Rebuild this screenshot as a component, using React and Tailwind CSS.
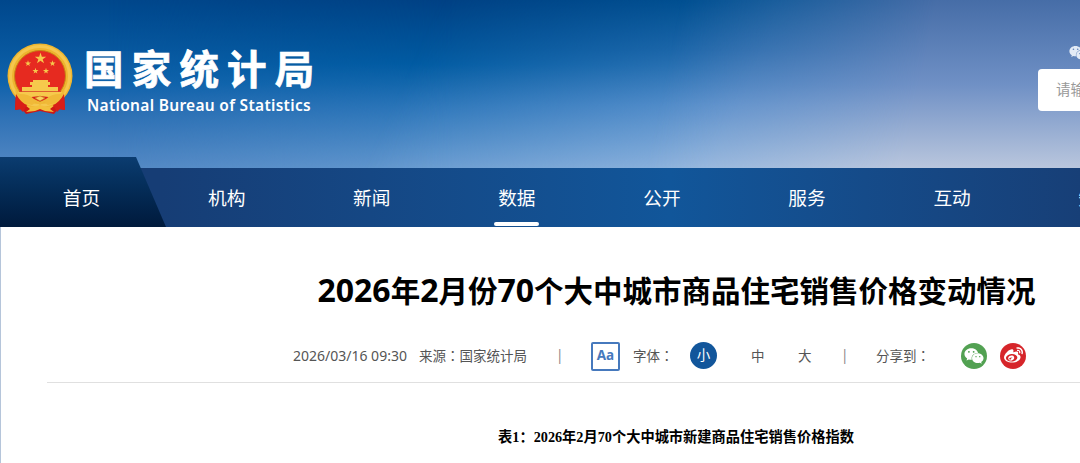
import { FaWeixin, FaWeibo } from 'react-icons/fa';

const navItems = ['首页', '机构', '新闻', '数据', '公开', '服务', '互动', '知识'];

function Emblem() {
  const star = 'M0-1 .225-.309 .951-.309 .363.118 .588.809 0 .382-.588.809-.363.118-.951-.309-.225-.309Z';
  return (
    <svg viewBox="0 0 68 72" className="h-[72px] w-[68px] shrink-0">
      <path d="M9 48 8 67l7-1 4 5 14-3 14 3 4-5 7 1-1-19Z" fill="#cf1714" />
      <circle cx="33" cy="33" r="32.5" fill="#eeb52f" />
      <circle cx="33" cy="33" r="29.5" fill="none" stroke="#f5c74e" strokeWidth="3" />
      <circle cx="33" cy="33" r="25.5" fill="#e62a20" stroke="#c98416" strokeWidth="1" />
      <g fill="#f6c94c">
        <path d={star} transform="translate(33.5 15.5) scale(6)" />
        <path d={star} transform="translate(21 20.5) scale(3.2)" />
        <path d={star} transform="translate(45.5 20.5) scale(3.2)" />
        <path d={star} transform="translate(28.5 28) scale(3.2)" />
        <path d={star} transform="translate(39 28) scale(3.2)" />
        <path d="M26 37h15v2h2v3h-2v2h10v5h5l-4 5H14l-4-5h5v-5h10v-2h-2v-3h3Z" />
      </g>
      <path d="M12 48.5h42" stroke="#d8452a" strokeWidth=".8" />
      <path d="M20 54.5q8 0 13 4 5-4 13-4l-13-1.500Z" fill="#d8221b" />
      <path
        d="M13 51q9 0 14 5l6 3 6-3q5-5 14-5l5-4q-2 10-9 13l-8 2-4-3-4 3-4-3-4 3-8-2q-7-3-9-13Z"
        fill="#f0b938"
      />
      <path d="m28 55 5-2 5 2-5 3Z" fill="#f9d160" stroke="#c98416" strokeWidth=".6" />
      <path d="m18 62 9 2 6-2 6 2 9-2-5 4 4 3-9-1-5-2-5 2-9 1 4-3Z" fill="#f3c03c" />
      <path d="M9 51q5 9 11 11l-4 7-3-3-5 1ZM57 51q-5 9-11 11l4 7 3-3 5 1Z" fill="#d91d18" />
    </svg>
  );
}

function Header() {
  return (
    <header className="relative h-[168px] bg-linear-to-b from-[#00478c] via-[#0f63ac] via-50% to-[#5288c4]">
      <div className="absolute inset-0 bg-[linear-gradient(to_bottom,#004184,#005ba2_38%,#2d77ba_65%,#6398cf)] mask-[linear-gradient(to_right,transparent_10%,black_42%)]" />
      <div className="absolute inset-0 bg-[linear-gradient(to_bottom,#005596,#256cae_30%,#5a91cd_62%,#8fb4de)] mask-[linear-gradient(115deg,transparent_38%,black_68%)]" />
      <div className="absolute inset-0 bg-[linear-gradient(to_bottom,#466da7,#6f90c5_50%,#b9c6dd)] mask-[linear-gradient(102deg,transparent_61%,black_84%)]" />
      <div className="relative flex h-full justify-between pl-[7px]">
        <div className="flex pt-[43px]">
          <Emblem />
          <div className="ml-[9px] text-white">
            <div className="-mt-[2px] h-[54px] text-[39.5px] leading-[52px] font-bold tracking-[8.2px] whitespace-nowrap font-['Noto_Sans_CJK_SC',sans-serif] [-webkit-text-stroke:0.7px_white]">
              国家统计局
            </div>
            <div className="ml-[3px] text-[15.5px] leading-[20px] font-semibold tracking-[0.3px] whitespace-nowrap font-['Noto_Sans',sans-serif]">
              National Bureau of Statistics
            </div>
          </div>
        </div>
        <div className="w-[42px] shrink-0 overflow-hidden pt-[44px]">
          <FaWeixin className="ml-[31px] text-[#e3ebf6]" size={18} />
          <div className="mt-[7px] flex h-[42px] w-[200px] items-center rounded-[4px] bg-white pl-[18px] text-[14.5px] text-[#999]">
            请输入关键字
          </div>
        </div>
      </div>
    </header>
  );
}

function Nav() {
  return (
    <nav className="relative h-[59px] bg-linear-to-r from-[#163d75] from-15% via-[#11569a] via-62% to-[#173f77]">
      <div className="absolute bottom-0 left-0 h-[70px] w-[166px] bg-linear-to-b from-[#0b3c70] to-[#001a3c] [clip-path:polygon(0_0,136px_0,100%_100%,0_100%)]" />
      <ul className="relative flex h-full pl-[9px]">
        {navItems.map((item) => (
          <li
            key={item}
            className="flex w-[145.1px] shrink-0 flex-col items-center pt-[16px] text-[18.7px] leading-[28px] text-white"
          >
            {item}
            {item === '数据' && <span className="mt-[10px] h-[4px] w-[45px] rounded-[2px] bg-white" />}
          </li>
        ))}
      </ul>
    </nav>
  );
}

function Digits({ children }) {
  return <span className="text-[32px]">{children}</span>;
}

// full-width colon with its dots in the middle of the em box
function Colon() {
  return <span className="font-['Noto_Sans_CJK_TC',sans-serif]">：</span>;
}

export default function App() {
  return (
    <div className="h-[463px] w-full overflow-hidden bg-white font-['Noto_Sans','Noto_Sans_CJK_SC',sans-serif]">
      <Header />
      <Nav />
      <main className="h-[236px] border-l border-[#b5c5da]">
        <div className="ml-[46px] h-[156px] w-[1259px] border-b border-[#e0e0e0]">
          <h1 className="pt-[39px] text-center text-[29.5px] leading-[48px] font-bold whitespace-nowrap text-black">
            <Digits>2026</Digits>年<Digits>2</Digits>月份<Digits>70</Digits>个大中城市商品住宅销售价格变动情况
          </h1>
          <div className="mt-[25px] ml-[246px] flex h-[32px] items-center text-[13.5px] whitespace-nowrap text-[#555]">
            <span className="w-[126px] pb-[2px] text-[14px]">2026/03/16 09:30</span>
            <span className="w-[137px]">来源<Colon />国家统计局</span>
            <span className="w-[35px] pb-[2px] text-[#888]">|</span>
            <span className="flex h-[29px] w-[29px] items-center justify-center rounded-[2px] border-2 border-[#4679bd] pb-[1px] text-[13.5px] font-bold text-[#4679bd]">
              Aa
            </span>
            <span className="ml-[13px] w-[57px]">字体<Colon /></span>
            <span className="mb-[1px] flex h-[27px] w-[27px] items-center justify-center rounded-full bg-[#12569b] text-white">
              小
            </span>
            <span className="ml-[34px] w-[47px]">中</span>
            <span className="w-[43px]">大</span>
            <span className="w-[35px] pb-[2px] text-[#888]">|</span>
            <span className="w-[85px]">分享到<Colon /></span>
            <span className="mb-[1px] flex h-[26px] w-[26px] items-center justify-center rounded-full bg-[#52a152] text-white">
              <FaWeixin size={20} />
            </span>
            <span className="mb-[1px] ml-[13px] flex h-[26px] w-[26px] items-center justify-center rounded-full bg-[#d6252a] text-white">
              <FaWeibo size={19} />
            </span>
          </div>
        </div>
        <p className="mt-[43px] ml-[46px] w-[1258px] text-center text-[14.24px] leading-[22px] font-bold whitespace-nowrap text-black font-['Liberation_Serif','Noto_Sans_CJK_SC',serif]">
          表1：2026年2月70个大中城市新建商品住宅销售价格指数
        </p>
      </main>
    </div>
  );
}
